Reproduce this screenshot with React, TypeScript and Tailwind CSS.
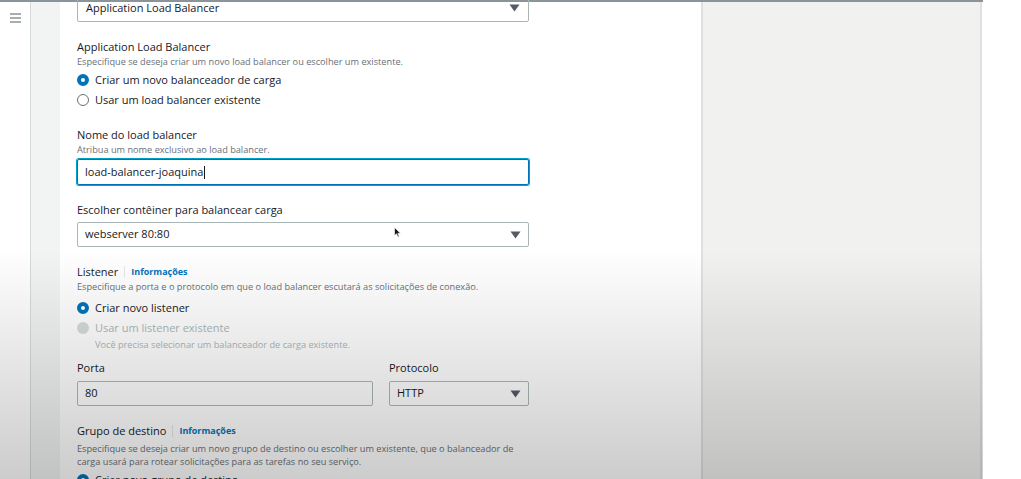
import React from 'react';

const Caret = () => (
  <svg width="11" height="8" viewBox="0 0 11 8" className="shrink-0">
    <path d="M0.5 0.5 L10.5 0.5 L5.5 7.5 Z" fill="#545b64" />
  </svg>
);

const Radio = ({ checked, disabled, label }: { checked?: boolean; disabled?: boolean; label: string }) => (
  <div className={`flex items-center gap-[6px] ${disabled ? 'text-[#aab7b8]' : 'text-[#16191f]'}`}>
    {checked ? (
      <span className="w-[12px] h-[12px] rounded-full border-[4px] border-[#0073bb] bg-white" />
    ) : disabled ? (
      <span className="w-[12px] h-[12px] rounded-full bg-[#d5dbdb]" />
    ) : (
      <span className="w-[12px] h-[12px] rounded-full border border-[#687078] bg-white" />
    )}
    <span className="text-[11px]">{label}</span>
  </div>
);

const Info = () => (
  <span className="flex items-center">
    <span className="w-px h-[12px] bg-[#e3e6e8] mx-[6px]" />
    <span className="text-[9px] font-bold text-[#0073bb]">Informações</span>
  </span>
);

export default function App() {
  return (
    <div className="relative w-[1021px] h-[479px] overflow-hidden bg-white text-[#16191f] font-['Open_Sans','Liberation_Sans',sans-serif]">
      <div className="flex h-full w-[983px] border-t-2 border-[#8a9499]">
        {/* sidebar */}
        <div className="w-[31px] shrink-0 border-r border-[#d5dbdb] bg-white flex justify-center pt-[11px]">
          <svg width="11" height="10" viewBox="0 0 11 10">
            <path d="M0 1h11M0 5h11M0 9h11" stroke="#545b64" strokeWidth="1.2" />
          </svg>
        </div>
        <div className="w-[29px] shrink-0 bg-[#f2f3f3]" />

        {/* form panel */}
        <div className="w-[641px] shrink-0 bg-white pl-[17px]">
          <div className="w-[452px]">
            <div className="-mt-[8px] h-[28px] border border-[#aab7b8] rounded-[2px] flex items-center justify-between px-[8px]">
              <span className="text-[11px]">Application Load Balancer</span>
              <Caret />
            </div>

            <div className="mt-[17px] text-[11px] leading-[16px]">Application Load Balancer</div>
            <div className="text-[9.2px] leading-[13px] text-[#687078]">
              Especifique se deseja criar um novo load balancer ou escolher um existente.
            </div>
            <div className="mt-[2px] h-[20px] flex items-center">
              <Radio checked label="Criar um novo balanceador de carga" />
            </div>
            <div className="h-[20px] flex items-center">
              <Radio label="Usar um load balancer existente" />
            </div>

            <div className="mt-[17px] text-[11px] leading-[16px]">Nome do load balancer</div>
            <div className="text-[9.2px] leading-[13px] text-[#687078]">Atribua um nome exclusivo ao load balancer.</div>
            <div className="mt-[3px] h-[26px] border border-[#0073bb] rounded-[2px] flex items-center px-[7px] shadow-[0_0_0_1px_#00a1c9]">
              <span className="text-[11px]">load-balancer-joaquina</span>
              <span className="w-px h-[13px] bg-[#16191f] ml-px" />
            </div>

            <div className="mt-[17px] text-[11px] leading-[16px]">Escolher contêiner para balancear carga</div>
            <div className="mt-[4px] h-[25px] border border-[#aab7b8] rounded-[2px] flex items-center justify-between px-[7px]">
              <span className="text-[11px]">webserver 80:80</span>
              <Caret />
            </div>

            <div className="mt-[17px] h-[16px] flex items-center">
              <span className="text-[11px] leading-[16px]">Listener</span>
              <Info />
            </div>
            <div className="text-[9.2px] leading-[13px] text-[#687078]">
              Especifique a porta e o protocolo em que o load balancer escutará as solicitações de conexão.
            </div>
            <div className="mt-[5px] h-[20px] flex items-center">
              <Radio checked label="Criar novo listener" />
            </div>
            <div className="h-[20px] flex items-center">
              <Radio disabled label="Usar um listener existente" />
            </div>
            <div className="pl-[18px] text-[9.2px] leading-[13px] text-[#aab7b8]">
              Você precisa selecionar um balanceador de carga existente.
            </div>

            <div className="mt-[9px] flex gap-[16px]">
              <div className="w-[296px]">
                <div className="text-[11px] leading-[16px]">Porta</div>
                <div className="mt-[5px] h-[25px] border border-[#aab7b8] rounded-[2px] flex items-center px-[7px]">
                  <span className="text-[11px]">80</span>
                </div>
              </div>
              <div className="w-[140px]">
                <div className="text-[11px] leading-[16px]">Protocolo</div>
                <div className="mt-[5px] h-[25px] border border-[#aab7b8] rounded-[2px] flex items-center justify-between px-[7px]">
                  <span className="text-[11px]">HTTP</span>
                  <Caret />
                </div>
              </div>
            </div>

            <div className="mt-[17px] h-[16px] flex items-center">
              <span className="text-[11px] leading-[16px]">Grupo de destino</span>
              <Info />
            </div>
            <div className="mt-[3px] text-[9.2px] leading-[13px] text-[#687078] w-[445px]">
              Especifique se deseja criar um novo grupo de destino ou escolher um existente, que o balanceador de
              carga usará para rotear solicitações para as tarefas no seu serviço.
            </div>
            <div className="mt-[2px] h-[20px] flex items-center">
              <Radio checked label="Criar novo grupo de destino" />
            </div>
          </div>
        </div>

        {/* right column */}
        <div className="w-[281px] shrink-0 bg-[#f1f2f0] border-l-2 border-r-2 border-[#dfe1e0]" />
      </div>

      {/* mouse pointer */}
      <svg className="absolute left-[394px] top-[227px]" width="8" height="11" viewBox="0 0 8 11">
        <path d="M0.5 0.5 L0.5 8.5 L2.5 6.8 L4 10 L5.2 9.4 L3.8 6.3 L6.5 6.3 Z" fill="#16191f" stroke="#fff" strokeWidth="0.6" />
      </svg>

      {/* video shading */}
      <div className="absolute left-0 top-0 w-[983px] h-full pointer-events-none bg-linear-to-b from-transparent from-[52%] to-black/20" />
    </div>
  );
}
